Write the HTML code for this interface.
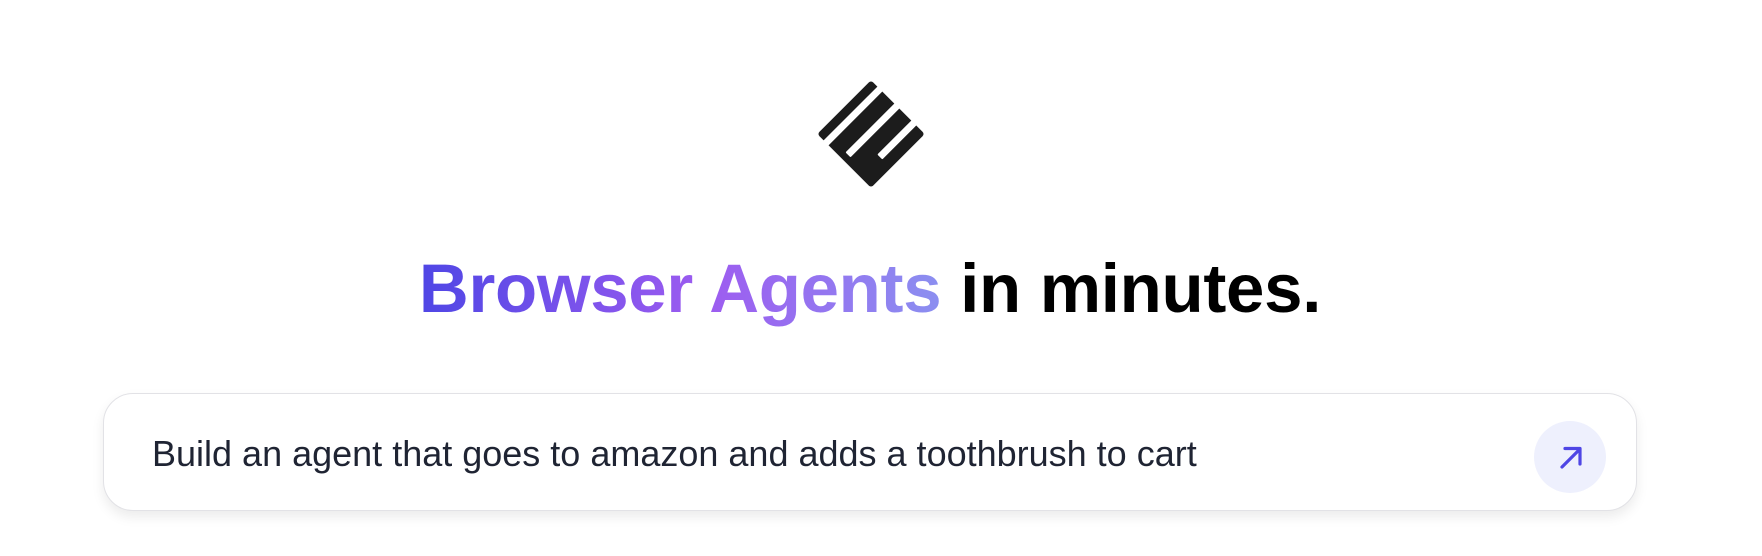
<!DOCTYPE html>
<html><head><meta charset="utf-8"><style>
html,body{margin:0;padding:0;background:#fff;width:1762px;height:556px;overflow:hidden}
body{position:relative;font-family:"Liberation Sans",Arial,sans-serif}
h1{position:absolute;left:-11px;width:1762px;top:248px;margin:0;text-align:center;font-size:69px;font-weight:700;line-height:82px;color:#000;letter-spacing:-0.3px}
.g{background:linear-gradient(90deg,#4f46e5 0%,#9d5cf0 55%,#8b8ff0 100%);-webkit-background-clip:text;background-clip:text;color:transparent}
.box{position:absolute;left:103px;top:393px;width:1532px;height:116px;border:1.5px solid #e2e2e6;border-radius:30px;box-shadow:0 6px 12px rgba(0,0,0,0.08);background:#fff}
.txt{position:absolute;left:152px;top:434px;font-size:36px;color:#1f2433;line-height:40px}
.btn{position:absolute;left:1534px;top:421px;width:72px;height:72px;border-radius:50%;background:#eef0fd}
</style></head><body>
<svg style="position:absolute;left:0;top:0" width="1762" height="556">
<g transform="translate(871,134) rotate(-45)">
<rect x="-38" y="-38" width="76" height="76" rx="3" fill="#1c1c1c"/>
<rect x="-40" y="-29" width="80" height="7" fill="#fff"/>
<rect x="-31" y="-5" width="71" height="7" fill="#fff" rx="1"/>
<rect x="-10" y="19" width="50" height="7" fill="#fff" rx="1"/>
</g>
</svg>
<h1><span class="g">Browser Agents</span> in minutes.</h1>
<div class="box"></div>
<div class="txt">Build an agent that goes to amazon and adds a toothbrush to cart</div>
<div class="btn"><svg width="72" height="72" viewBox="0 0 72 72"><path d="M28 46 L46 28 M31 27.5 H46 V43" stroke="#4f46e5" stroke-width="3.2" fill="none" stroke-linecap="round" stroke-linejoin="round"/></svg></div>
</body></html>
